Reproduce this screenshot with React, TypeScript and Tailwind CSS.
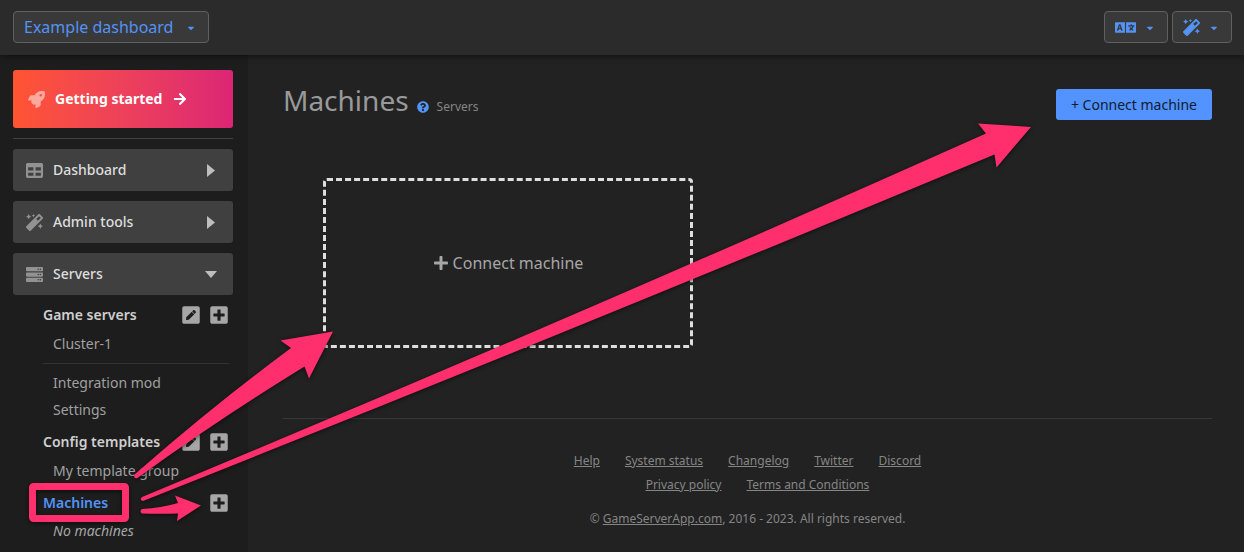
import { FaRocket, FaArrowRight, FaTable, FaMagic, FaServer, FaCaretDown, FaPenSquare, FaPlusSquare, FaQuestionCircle, FaPlus, FaLanguage } from 'react-icons/fa';
import type { ReactNode } from 'react';

function TopButton({ label, children }: { label?: string; children: ReactNode }) {
  return (
    <button aria-label={label} className="flex h-8 items-center gap-[9px] rounded border border-[#606060] bg-[#393939] pr-3 pl-[10px] text-base text-[#5393f5]">
      {children}
      <FaCaretDown className="mt-[2px] size-[10px]" />
    </button>
  );
}

function NavButton({ icon, label, open = false }: { icon: ReactNode; label: string; open?: boolean }) {
  return (
    <button aria-expanded={open} className="flex h-[42px] w-full items-center rounded-[3px] bg-[#404040] px-[13px] text-sm font-medium text-[#dedede]">
      <span className="mr-[10px] text-[17px] text-[#929292]">{icon}</span>
      {label}
      <span className="ml-auto flex w-[18px] justify-center text-[#bebebe]">
        {open ? (
          <svg viewBox="0 0 12 7" className="h-[7px] w-3" fill="currentColor"><path d="M0 0h12L6 7z" /></svg>
        ) : (
          <svg viewBox="0 0 8 13" className="h-[13px] w-2" fill="currentColor"><path d="M0 0v13l8-6.500z" /></svg>
        )}
      </span>
    </button>
  );
}

function Group({ title, edit = false, active = false }: { title: string; edit?: boolean; active?: boolean }) {
  return (
    <div className="flex h-8 items-center gap-2 text-xl text-[#a6a6a6]">
      <a href="#" className={active ? 'mr-auto text-sm font-semibold text-[#5393f5]' : 'mr-auto text-sm font-semibold text-[#cfcfcf]'}>{title}</a>
      {edit && <button aria-label={`Edit ${title}`}><FaPenSquare /></button>}
      <button aria-label={`Add to ${title}`}><FaPlusSquare /></button>
    </div>
  );
}

function Item({ children }: { children: ReactNode }) {
  return <a href="#" className="block h-[27px] pl-[10px] text-sm leading-[25px] text-[#a0a0a0]">{children}</a>;
}

function Arrows() {
  return (
    <svg className="pointer-events-none absolute top-0 left-0 h-[552px] w-[1244px] drop-shadow-[0_1px_2px_rgba(0,0,0,0.6)]" viewBox="0 0 1244 552" fill="#ff2e6d" aria-hidden="true">
      <path d="M134.500 474.500Q214 405 291 348L280.500 340.500 333 331.500 309 378.500 304.500 366.500Q216 421 137.500 478Q133 479.500 134.500 474.500Z" />
      <path d="M142 497Q564 322 986 133.500L978 123.500 1031 127 996.500 167.500 994.500 154.500Q564 334 143 501Q139 500 142 497Z" />
      <path d="M142 509Q161 508 178 503L175 495.500 201 505.500 177 521 178 513.500Q161 514 142 513.500Q139 511 142 509Z" />
      <rect x="32.500" y="486.500" width="93" height="32" fill="none" stroke="#ff2e6d" strokeWidth="7" rx="1" />
    </svg>
  );
}

export default function App() {
  const links = ['Help', 'System status', 'Changelog', 'Twitter', 'Discord'];
  return (
    <div className="relative flex min-h-screen flex-col overflow-hidden bg-[#222] font-['Noto_Sans',sans-serif] text-[#a6a6a6]">
      <header className="z-10 flex h-[55px] items-start gap-1 bg-[#2b2b2b] pt-[11px] pr-3 pl-[13px] shadow-[0_1px_6px_rgba(0,0,0,0.5)]">
        <div className="mr-auto"><TopButton><span className="pr-1">Example dashboard</span></TopButton></div>
        <TopButton label="Language"><FaLanguage className="size-[21px]" /></TopButton>
        <TopButton label="Tools"><FaMagic className="size-[17px]" /></TopButton>
      </header>
      <div className="flex flex-1">
        <aside className="w-[248px] shrink-0 bg-[#1d1d1d] pt-[15px] pr-[15px] pl-[13px]">
          <a href="#" className="flex h-[58px] items-center rounded-[3px] bg-linear-to-r from-[#ff5430] to-[#dc2574] px-[15px] text-sm font-bold text-white">
            <FaRocket className="mr-[10px] size-[17px] opacity-50" />
            Getting started
            <FaArrowRight className="ml-[11px] size-[14px]" />
          </a>
          <hr className="my-[10px] border-[#404040]" />
          <nav>
            <div className="flex flex-col gap-[10px]">
              <NavButton icon={<FaTable />} label="Dashboard" />
              <NavButton icon={<FaMagic />} label="Admin tools" />
              <NavButton icon={<FaServer />} label="Servers" open />
            </div>
            <div className="pt-1 pr-1 pl-[30px]">
              <Group title="Game servers" edit />
              <Item>Cluster-1</Item>
              <hr className="mt-[5px] mb-[6px] border-[#333]" />
              <Item>Integration mod</Item>
              <Item>Settings</Item>
              <div className="pt-[2px]"><Group title="Config templates" edit /></div>
              <Item>My template group</Item>
              <div className="pt-[2px]"><Group title="Machines" active /></div>
              <p className="pl-[10px] text-sm leading-6 italic">No machines</p>
            </div>
          </nav>
        </aside>
        <main className="min-w-0 flex-1 pt-[29px] pr-8 pl-[35px]">
          <div className="flex items-start justify-between">
            <div className="flex items-baseline gap-2">
              <h1 className="text-[28px] leading-8 text-[#999]">Machines</h1>
              <FaQuestionCircle className="size-3 translate-y-[2px] text-[#5393f5]" />
              <span className="text-xs text-[#858585]">Servers</span>
            </div>
            <button className="mt-[5px] h-[31px] rounded-[3px] bg-[#5393ff] px-[15px] text-sm text-[#111c30]">+ Connect machine</button>
          </div>
          <button className="mt-[58px] ml-10 flex h-[170px] w-[370px] items-center justify-center gap-1 rounded border-3 border-dashed border-[#dedede] text-base text-[#a6a6a6]">
            <FaPlus /> Connect machine
          </button>
          <hr className="mt-[70px] border-[#373737]" />
          <footer className="pt-[30px] text-center text-xs leading-6 text-[#858585]">
            <div className="flex justify-center gap-[25px]">
              {links.map((link) => <a href="#" key={link} className="underline">{link}</a>)}
            </div>
            <div className="flex justify-center gap-[25px] pl-5">
              <a href="#" className="underline">Privacy policy</a>
              <a href="#" className="underline">Terms and Conditions</a>
            </div>
            <p className="mt-[10px]">© <a href="#" className="underline">GameServerApp.com</a>, 2016 - 2023. All rights reserved.</p>
          </footer>
        </main>
      </div>
      <Arrows />
    </div>
  );
}
